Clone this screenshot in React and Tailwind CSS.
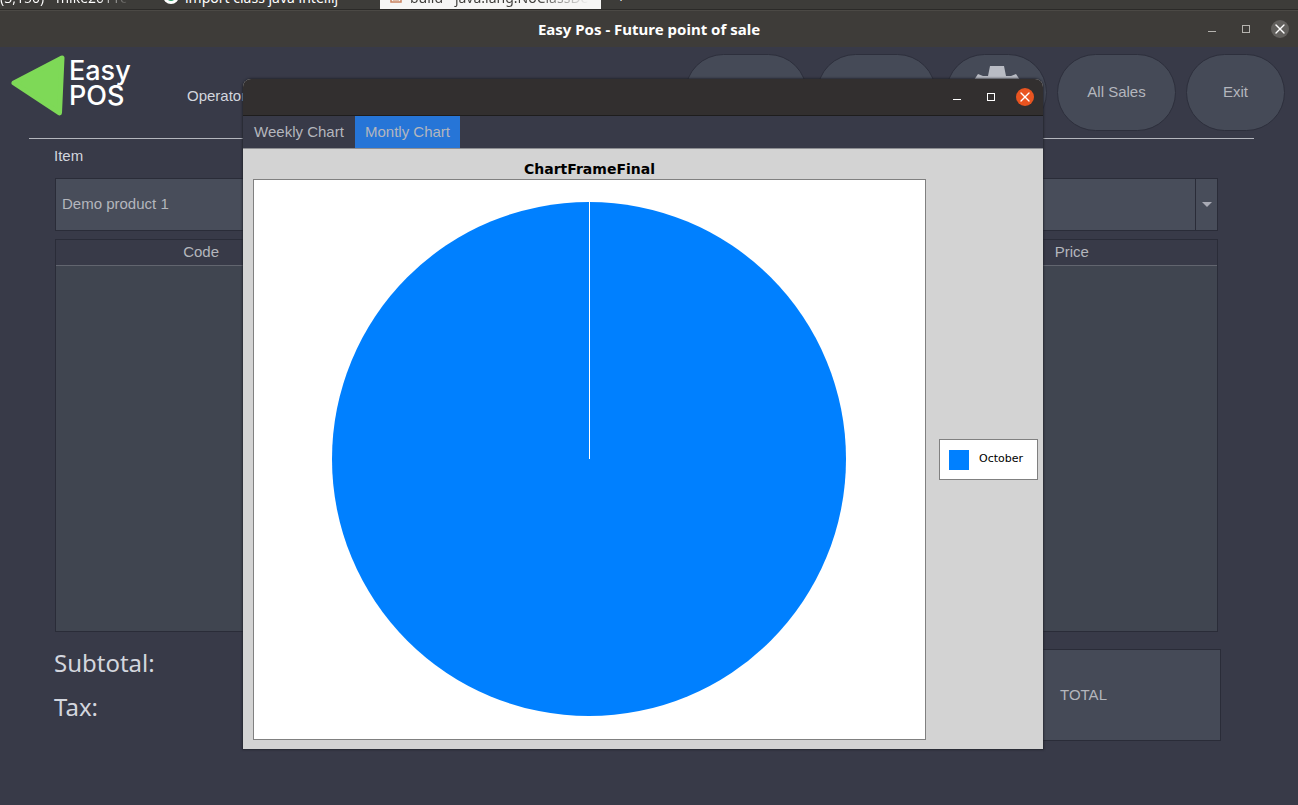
import { useState } from 'react';
import { X } from 'lucide-react';

const TABS = [
  { name: 'Weekly Chart', width: 'w-[112px]' },
  { name: 'Montly Chart', width: 'w-[105px]' },
];
const COLUMNS = ['Code', '', '', 'Price'];

function BrowserStrip() {
  return (
    <div className="flex h-[10px] items-end overflow-hidden border-b border-[#2b2a28] bg-[#3d3c39] font-['Noto_Sans',sans-serif] text-sm leading-5 whitespace-nowrap text-white">
      <div className="flex w-[380px] shrink-0 items-end pb-px">
        <span className="w-[163px] overflow-hidden bg-linear-to-r from-white from-60% to-transparent to-80% bg-clip-text text-transparent">
          (3,150) - mike2011c
        </span>
        <svg viewBox="0 0 16 16" className="mr-[6px] mb-[4px] size-4 shrink-0" aria-hidden="true">
          <circle cx="8" cy="8" r="8" fill="#fff" />
          <circle cx="8" cy="8" r="5" fill="#2f9e6b" />
        </svg>
        <span>import class java intellij</span>
      </div>
      <div className="flex w-[221px] shrink-0 items-end bg-[#f6f6f5] px-[10px] pb-px text-[#3d3c39]">
        <svg viewBox="0 0 12 12" className="mr-2 mb-[5px] size-3 shrink-0" aria-hidden="true">
          <rect x="1" y="1" width="10" height="10" fill="#f6f6f5" stroke="#c9835f" strokeWidth="1.5" />
          <path d="M3 7h6M3 9h6" stroke="#c9835f" />
        </svg>
        <span className="overflow-hidden bg-linear-to-r from-[#3d3c39] from-70% to-transparent bg-clip-text text-transparent">
          build - java.lang.NoClassDe
        </span>
      </div>
      <span className="pb-px pl-4">+</span>
    </div>
  );
}

function WindowControls({ active }) {
  return (
    <div className={active ? 'flex items-center text-white' : 'flex items-center text-[#b5b3af]'}>
      <button aria-label="Minimize" className="flex h-5 w-[34px] items-center justify-center">
        <svg viewBox="0 0 8 8" className="size-2" aria-hidden="true">
          <path d="M0 6.5h8" stroke="currentColor" />
        </svg>
      </button>
      <button aria-label="Maximize" className="flex h-5 w-[34px] items-center justify-center">
        <svg viewBox="0 0 8 8" className="size-2" aria-hidden="true">
          <rect x="0.5" y="0.5" width="7" height="7" fill="none" stroke="currentColor" />
        </svg>
      </button>
      <button
        aria-label="Close"
        className={
          active
            ? 'ml-2 flex size-[18px] items-center justify-center rounded-full bg-[#e95420]'
            : 'ml-2 flex size-[18px] items-center justify-center rounded-full bg-[#62605d] text-white'
        }
      >
        <X className="size-4" strokeWidth={2} />
      </button>
    </div>
  );
}

function Logo() {
  return (
    <div className="flex items-start pt-px">
      <svg viewBox="0 0 54 61" className="h-[61px] w-[54px]" aria-hidden="true">
        <path
          d="M3 28 51 3 48.500 58Z"
          fill="#7ed957"
          stroke="#7ed957"
          strokeWidth="5"
          strokeLinejoin="round"
        />
      </svg>
      <div className="w-[65px] pt-[3px] pl-1 font-['Inter',sans-serif] text-[27px] leading-[25px] font-medium text-white">
        <div>Easy</div>
        <div>POS</div>
      </div>
    </div>
  );
}

function Gear() {
  return (
    <svg viewBox="0 0 54 54" className="size-[54px]" aria-hidden="true">
      <path
        fillRule="evenodd"
        fill="#b9bcc4"
        d="M20 0H34L36 10 41 10 46 8 50 14 44 18 54 20V34L44 36 50 40 46 46 41 44 36 44 34 54H20L18 44 13 44 8 46 4 40 10 36 0 34V20L10 18 4 14 8 8 13 10 18 10ZM27 18A9 9 0 1 0 27 36 9 9 0 1 0 27 18Z"
      />
    </svg>
  );
}

function RoundButton({ width, label, children }) {
  return (
    <button
      aria-label={label}
      className={`flex h-[77px] items-center justify-center rounded-[39px] border border-[#2d2f3c] bg-[#454a57] ${width}`}
    >
      {children}
    </button>
  );
}

function ChartWindow() {
  const [tab, setTab] = useState('Montly Chart');

  return (
    <section className="absolute top-[79px] right-[255px] left-[243px] flex h-[670px] flex-col rounded-t-lg bg-[#d3d3d3] shadow-[0_0_2px_1px_rgba(30,31,40,0.7)]">
      <div className="flex h-[37px] items-center justify-end rounded-t-lg border-b border-[#1e1d1d] bg-[#322f2f] pr-[9px]">
        <WindowControls active />
      </div>
      <nav className="flex h-8 bg-[#383a48] text-[#b4b6bd]">
        {TABS.map(({ name, width }) => (
          <button
            key={name}
            onClick={() => setTab(name)}
            className={`${width} ${name === tab ? 'bg-[#2675d7]' : ''}`}
          >
            {name}
          </button>
        ))}
      </nav>
      <div className="grid flex-1 grid-cols-[1fr_99px] grid-rows-[auto_1fr] gap-x-[13px] border-t border-[#8d8e92] pt-[10px] pr-[5px] pb-[9px] pl-[10px] font-['DejaVu_Sans',sans-serif] text-black">
        <h2 className="text-center text-sm leading-5 font-bold">ChartFrameFinal</h2>
        <div className="col-start-1 row-start-2 flex items-center justify-center border border-[#808080] bg-white">
          <svg viewBox="0 0 515 515" className="size-[515px]" role="img" aria-label="October 100%">
            <circle cx="257" cy="257" r="257" fill="#0080ff" />
            <path d="M257.500 0V257" stroke="#fff" />
          </svg>
        </div>
        <div className="col-start-2 row-start-2 flex h-[41px] items-center gap-[10px] self-center border border-[#808080] bg-white pl-[9px] text-[11px]">
          <span className="size-5 bg-[#0080ff]" />
          <span>October</span>
        </div>
      </div>
    </section>
  );
}

export default function App() {
  return (
    <div className="relative flex min-h-screen flex-col overflow-hidden bg-[#383a48] font-['Liberation_Sans',Arial,sans-serif] text-[15px] text-[#b4b6bd]">
      <BrowserStrip />

      <div className="grid h-[37px] grid-cols-[1fr_auto_1fr] items-center border-t border-[#4b4945] bg-[#3e3c39]">
        <h1 className="col-start-2 font-['Noto_Sans',sans-serif] text-[15px] font-bold text-white">
          Easy Pos - Future point of sale
        </h1>
        <div className="justify-self-end pr-[9px]">
          <WindowControls />
        </div>
      </div>

      <header className="flex items-start pt-[7px] pr-[13px] pl-[11px]">
        <Logo />
        <span className="pt-[31px] pl-[57px] text-[#d3d6de]">Operator</span>
        <div className="ml-auto flex gap-[10px]">
          <RoundButton width="w-[122px]" label="Products" />
          <RoundButton width="w-[119px]" label="Charts" />
          <RoundButton width="w-[101px]" label="Settings">
            <Gear />
          </RoundButton>
          <RoundButton width="w-[119px]">All Sales</RoundButton>
          <RoundButton width="w-[99px]">Exit</RoundButton>
        </div>
      </header>
      <hr className="mt-[7px] mr-[44px] ml-[29px] border-[#b4b6bd]" />

      <main className="flex flex-1 flex-col pr-[80px] pl-[54px]">
        <label htmlFor="item" className="pt-[5px] leading-6 text-[#d3d6de]">
          Item
        </label>
        <div className="mt-[10px] ml-px flex h-[53px] border border-[#2a2c38] bg-[#484d5a] text-[#b4b6bd]">
          <select id="item" className="flex-1 appearance-none pl-[6px]">
            <option>Demo product 1</option>
          </select>
          <span className="flex w-[22px] items-center justify-center border-l border-[#2a2c38]">
            <svg viewBox="0 0 10 5" className="h-[5px] w-[10px]" aria-hidden="true">
              <path d="M0 0h10L5 5z" fill="#a9abb5" />
            </svg>
          </span>
        </div>

        <div className="mt-2 ml-px h-[393px] border border-[#2a2c38] bg-[#404550]">
          <table className="w-full table-fixed">
            <thead>
              <tr className="h-[25px] border-b border-[#62656f] bg-[#383a48]">
                {COLUMNS.map((name, i) => (
                  <th key={i} className="p-0 font-normal">
                    {name}
                  </th>
                ))}
              </tr>
            </thead>
          </table>
        </div>

        <div className="mt-[17px] mr-[-3px] flex justify-between">
          <div className="font-['Noto_Sans',sans-serif] text-2xl leading-7 text-[#d3d6de]">
            <p>Subtotal:</p>
            <p className="mt-4">Tax:</p>
          </div>
          <button className="h-[92px] w-[275px] border border-[#2a2c38] bg-[#454a57]">TOTAL</button>
        </div>
      </main>

      <ChartWindow />
    </div>
  );
}
